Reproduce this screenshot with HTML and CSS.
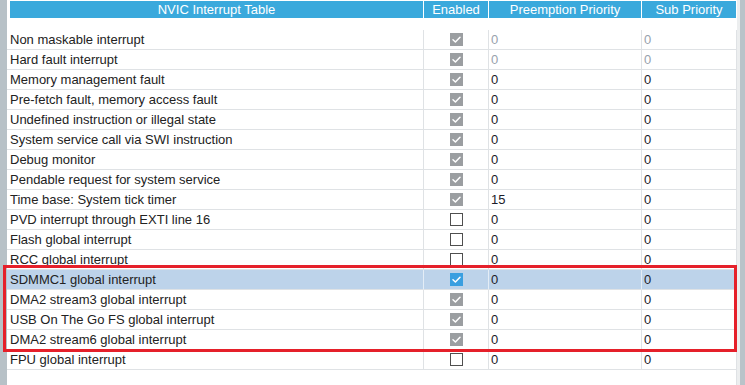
FILE: index.html
```html
<!DOCTYPE html>
<html>
<head>
<meta charset="utf-8">
<link rel="stylesheet" href="styles.css">
</head>
<body>
<div class="window">
  <div class="rail"></div>
  <div class="panel">
    <div class="head">
      <div class="hcell first">NVIC Interrupt Table</div>
      <div class="hcell">Enabled</div>
      <div class="hcell">Preemption Priority</div>
      <div class="hcell">Sub Priority</div>
    </div>
    <div class="body">
      <div class="row"><div class="cell name">Non maskable interrupt</div><div class="cell chk"><span class="box on"><svg viewBox="0 0 13 13"><polyline points="3,6.8 5.4,9 10,4.2"/></svg></span></div><div class="cell num dim">0</div><div class="cell num dim last">0</div></div>
      <div class="row"><div class="cell name">Hard fault interrupt</div><div class="cell chk"><span class="box on"><svg viewBox="0 0 13 13"><polyline points="3,6.8 5.4,9 10,4.2"/></svg></span></div><div class="cell num dim">0</div><div class="cell num dim last">0</div></div>
      <div class="row"><div class="cell name">Memory management fault</div><div class="cell chk"><span class="box on"><svg viewBox="0 0 13 13"><polyline points="3,6.8 5.4,9 10,4.2"/></svg></span></div><div class="cell num">0</div><div class="cell num last">0</div></div>
      <div class="row"><div class="cell name">Pre-fetch fault, memory access fault</div><div class="cell chk"><span class="box on"><svg viewBox="0 0 13 13"><polyline points="3,6.8 5.4,9 10,4.2"/></svg></span></div><div class="cell num">0</div><div class="cell num last">0</div></div>
      <div class="row"><div class="cell name">Undefined instruction or illegal state</div><div class="cell chk"><span class="box on"><svg viewBox="0 0 13 13"><polyline points="3,6.8 5.4,9 10,4.2"/></svg></span></div><div class="cell num">0</div><div class="cell num last">0</div></div>
      <div class="row"><div class="cell name">System service call via SWI instruction</div><div class="cell chk"><span class="box on"><svg viewBox="0 0 13 13"><polyline points="3,6.8 5.4,9 10,4.2"/></svg></span></div><div class="cell num">0</div><div class="cell num last">0</div></div>
      <div class="row"><div class="cell name">Debug monitor</div><div class="cell chk"><span class="box on"><svg viewBox="0 0 13 13"><polyline points="3,6.8 5.4,9 10,4.2"/></svg></span></div><div class="cell num">0</div><div class="cell num last">0</div></div>
      <div class="row"><div class="cell name">Pendable request for system service</div><div class="cell chk"><span class="box on"><svg viewBox="0 0 13 13"><polyline points="3,6.8 5.4,9 10,4.2"/></svg></span></div><div class="cell num">0</div><div class="cell num last">0</div></div>
      <div class="row"><div class="cell name">Time base: System tick timer</div><div class="cell chk"><span class="box on"><svg viewBox="0 0 13 13"><polyline points="3,6.8 5.4,9 10,4.2"/></svg></span></div><div class="cell num">15</div><div class="cell num last">0</div></div>
      <div class="row"><div class="cell name">PVD interrupt through EXTI line 16</div><div class="cell chk"><span class="box off"></span></div><div class="cell num">0</div><div class="cell num last">0</div></div>
      <div class="row"><div class="cell name">Flash global interrupt</div><div class="cell chk"><span class="box off"></span></div><div class="cell num">0</div><div class="cell num last">0</div></div>
      <div class="row"><div class="cell name">RCC global interrupt</div><div class="cell chk"><span class="box off"></span></div><div class="cell num">0</div><div class="cell num last">0</div></div>
      <div class="row sel"><div class="cell name">SDMMC1 global interrupt</div><div class="cell chk"><span class="box blue"><svg viewBox="0 0 13 13"><polyline points="3,6.8 5.4,9 10,4.2"/></svg></span></div><div class="cell num">0</div><div class="cell num last">0</div></div>
      <div class="row"><div class="cell name">DMA2 stream3 global interrupt</div><div class="cell chk"><span class="box on"><svg viewBox="0 0 13 13"><polyline points="3,6.8 5.4,9 10,4.2"/></svg></span></div><div class="cell num">0</div><div class="cell num last">0</div></div>
      <div class="row"><div class="cell name">USB On The Go FS global interrupt</div><div class="cell chk"><span class="box on"><svg viewBox="0 0 13 13"><polyline points="3,6.8 5.4,9 10,4.2"/></svg></span></div><div class="cell num">0</div><div class="cell num last">0</div></div>
      <div class="row"><div class="cell name">DMA2 stream6 global interrupt</div><div class="cell chk"><span class="box on"><svg viewBox="0 0 13 13"><polyline points="3,6.8 5.4,9 10,4.2"/></svg></span></div><div class="cell num">0</div><div class="cell num last">0</div></div>
      <div class="row"><div class="cell name">FPU global interrupt</div><div class="cell chk"><span class="box off"></span></div><div class="cell num">0</div><div class="cell num last">0</div></div>
    </div>
  </div>
  <div class="scroll"><div class="track"></div><div class="bar"></div></div>
  <div class="annot"></div>
</div>
</body>
</html>
```
FILE: styles.css
```css
html, body {
  margin: 0;
  padding: 0;
  background: #ffffff;
}
.window {
  position: relative;
  display: flex;
  width: 745px;
  height: 385px;
  overflow: hidden;
  font-family: "Liberation Sans", Arial, sans-serif;
  font-size: 13px;
  color: #222222;
}
.rail {
  width: 7px;
  flex: none;
  background: #b7c1c7;
}
.panel {
  width: 730px;
  flex: none;
  display: flex;
  flex-direction: column;
  background: #ffffff;
}
.head {
  display: grid;
  grid-template-columns: 417px 65px 153px 95px;
  margin-top: 1px;
  height: 17px;
  margin-bottom: 12px;
}
.hcell {
  background: #3aa9dc;
  color: #ffffff;
  text-align: center;
  line-height: 17px;
  margin-right: 1px;
  white-space: nowrap;
}
.hcell.first {
  margin-left: 3px;
}
.body {
  flex: 1;
  border-right: 1px solid #dfe2e5;
}
.row {
  display: grid;
  grid-template-columns: 417px 65px 153px 94px;
  height: 20px;
}
.row.sel {
  background: #bdd3ea;
}
.cell {
  border-right: 1px solid #dfe2e5;
  border-bottom: 1px solid #dfe2e5;
  line-height: 19px;
  white-space: nowrap;
  overflow: hidden;
}
.cell.last {
  border-right: none;
}
.row.sel .cell {
  border-right-color: #e4edf6;
}
.name {
  padding-left: 3px;
}
.num {
  padding-left: 2px;
  color: #1c1c2a;
}
.num.dim {
  color: #98a2ad;
}
.chk {
  display: flex;
  align-items: center;
  justify-content: center;
}
.box {
  width: 13px;
  height: 13px;
  box-sizing: border-box;
  display: block;
}
.box svg {
  display: block;
  width: 13px;
  height: 13px;
}
.box polyline {
  fill: none;
  stroke: #ffffff;
  stroke-width: 1.5;
  stroke-linecap: round;
  stroke-linejoin: round;
}
.box.on {
  background: #9b9ea1;
}
.box.blue {
  background: #3a9fe0;
}
.box.off {
  background: #ffffff;
  border: 1px solid #4f4f4f;
}
.scroll {
  width: 8px;
  flex: none;
  display: flex;
}
.track {
  width: 3px;
  background: #eceeef;
}
.bar {
  width: 5px;
  background: #b9c3c9;
}
.annot {
  position: absolute;
  left: 3px;
  top: 265px;
  width: 734px;
  height: 87px;
  box-sizing: border-box;
  border: 3px solid #e5202a;
}
```
